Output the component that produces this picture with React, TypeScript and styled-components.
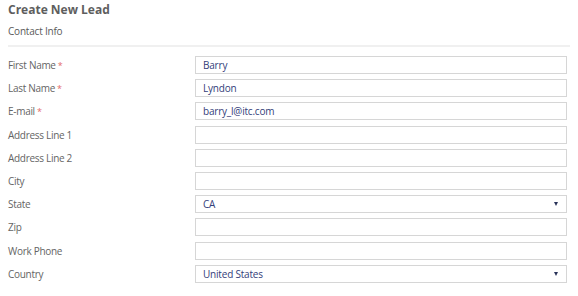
import React from 'react';
import styled, { createGlobalStyle } from 'styled-components';

const GlobalStyle = createGlobalStyle`
  body {
    margin: 0;
    background: #ffffff;
    font-family: "Open Sans", "Noto Sans", sans-serif;
  }
`;

type Field = {
  label: string;
  value?: string;
  required?: boolean;
  select?: boolean;
};

const fields: Field[] = [
  { label: 'First Name', value: 'Barry', required: true },
  { label: 'Last Name', value: 'Lyndon', required: true },
  { label: 'E-mail', value: 'barry_l@itc.com', required: true },
  { label: 'Address Line 1' },
  { label: 'Address Line 2' },
  { label: 'City' },
  { label: 'State', value: 'CA', select: true },
  { label: 'Zip' },
  { label: 'Work Phone' },
  { label: 'Country', value: 'United States', select: true },
];

const App = () => {
  return (
    <>
      <GlobalStyle />
      <S.Page>
        <S.Title>Create New Lead</S.Title>
        <S.SectionHeader>Contact Info</S.SectionHeader>
        <S.Form>
          {fields.map((f) => (
            <S.Row key={f.label}>
              <S.Label>
                {f.label}
                {f.required && <S.Star> *</S.Star>}
              </S.Label>
              <S.Box>
                <S.Value>{f.value}</S.Value>
                {f.select && <S.Arrow />}
              </S.Box>
            </S.Row>
          ))}
        </S.Form>
      </S.Page>
    </>
  );
};

const S = {
  Page: styled.div`
    width: 562px;
    padding: 0 8px;
  `,
  Title: styled.div`
    font-size: 12px;
    font-weight: 700;
    color: #5e5e5e;
    line-height: 20px;
  `,
  SectionHeader: styled.div`
    font-size: 10px;
    letter-spacing: -0.2px;
    color: #5a5a5a;
    line-height: 20px;
    padding: 1px 0 4px;
    border-bottom: 2px solid #f0f0f0;
  `,
  Form: styled.div`
    display: flex;
    flex-direction: column;
    gap: 5.2px;
    margin-top: 9px;
  `,
  Row: styled.div`
    display: grid;
    grid-template-columns: 187px 372px;
    align-items: center;
    height: 18px;
  `,
  Label: styled.div`
    font-size: 10px;
    letter-spacing: -0.3px;
    color: #646464;
  `,
  Star: styled.span`
    color: #e46a6a;
    font-size: 9px;
  `,
  Box: styled.div`
    height: 18px;
    box-sizing: border-box;
    border: 1px solid #d6d6d6;
    background: #fff;
    display: flex;
    align-items: center;
    justify-content: space-between;
    padding: 0 8px 0 7px;
  `,
  Value: styled.span`
    font-size: 10px;
    letter-spacing: -0.2px;
    color: #34407a;
  `,
  Arrow: styled.span`
    width: 0;
    height: 0;
    border-left: 2.5px solid transparent;
    border-right: 2.5px solid transparent;
    border-top: 4px solid #2a3359;
  `,
};

export default App;
